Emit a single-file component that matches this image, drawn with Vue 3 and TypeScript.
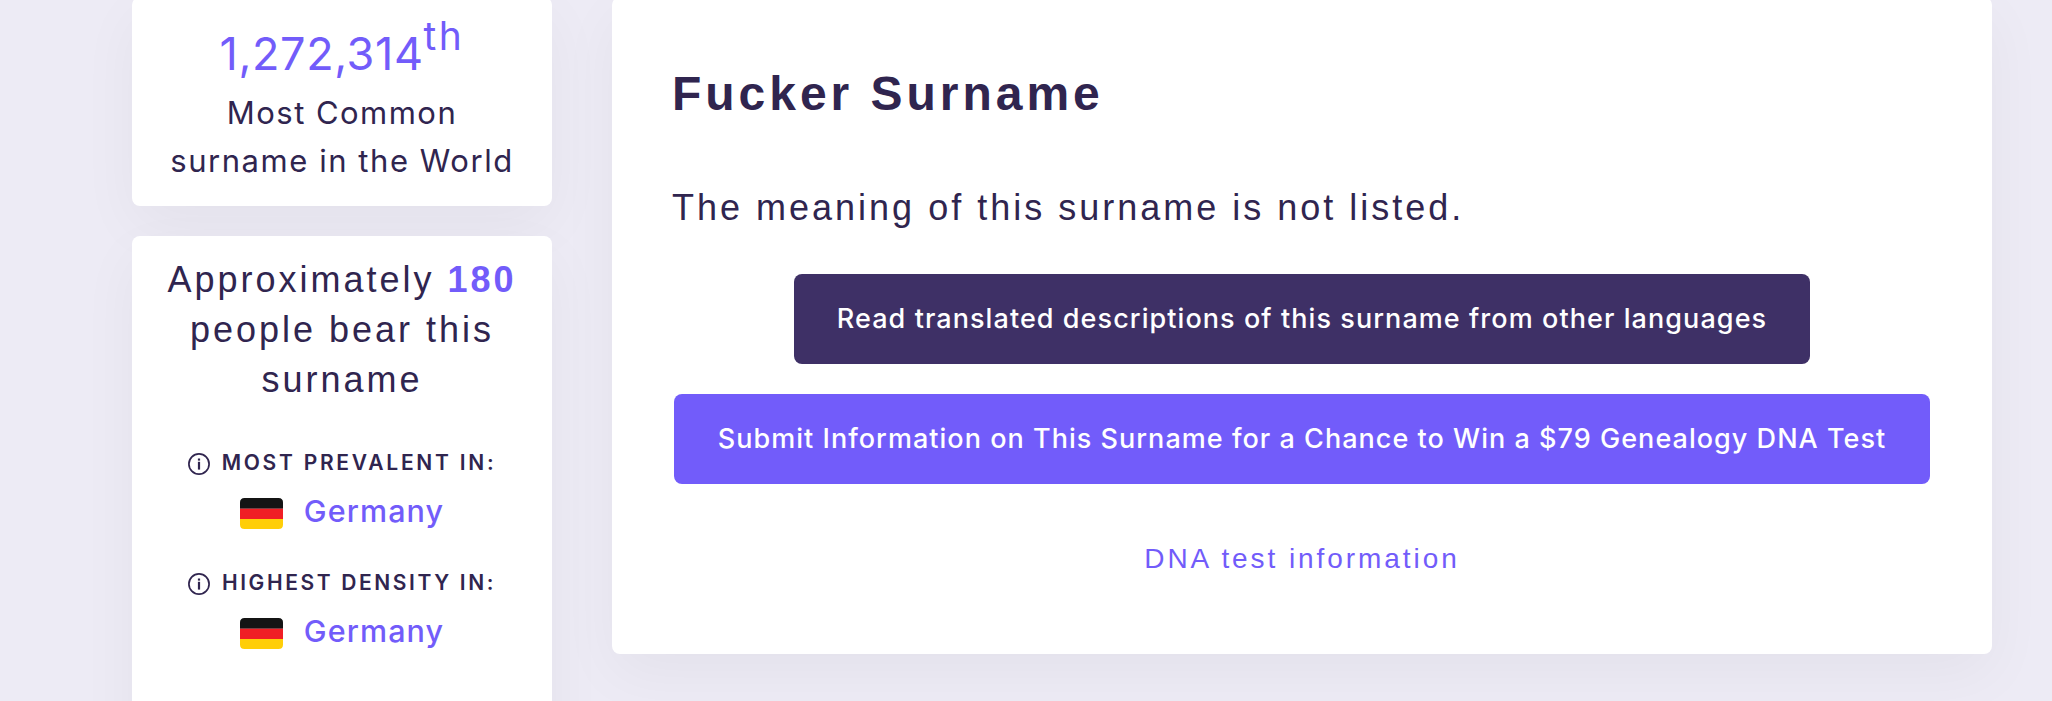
<script setup lang="ts">
interface Place {
  label: string
  country: string
  kind: string
}

const places: Place[] = [
  { label: 'MOST PREVALENT IN:', country: 'Germany', kind: 'prevalent' },
  { label: 'HIGHEST DENSITY IN:', country: 'Germany', kind: 'density' },
]
</script>

<template>
  <div class="page">
    <aside class="sidebar">
      <section class="card rank">
        <div class="rank-number">1,272,314<sup>th</sup></div>
        <div class="rank-line common">Most Common</div>
        <div class="rank-line">surname in the World</div>
      </section>

      <section class="card stats">
        <div class="bearers">
          Approximately <strong>180</strong><br />people bear this<br />surname
        </div>
        <div v-for="place in places" :key="place.kind" class="place">
          <div class="place-label">
            <svg class="info" viewBox="0 0 22 22" aria-hidden="true">
              <circle cx="11" cy="11" r="10.1" fill="none" stroke="currentColor" stroke-width="1.7" />
              <rect x="9.9" y="5.5" width="2.2" height="2.1" fill="currentColor" />
              <rect x="9.9" y="8.8" width="2.2" height="7.8" fill="currentColor" />
            </svg>
            <span :class="place.kind">{{ place.label }}</span>
          </div>
          <div class="country">
            <svg class="flag" viewBox="0 0 43 31" aria-hidden="true">
              <path d="M0 10.5V4.5Q0 0 4.5 0H38.5Q43 0 43 4.5V10.5Z" fill="#141414" />
              <rect y="10.3" width="43" height="10.7" fill="#f01f25" />
              <rect y="10" width="43" height="1" fill="#7b4044" />
              <path d="M0 21H43V26.5Q43 31 38.5 31H4.5Q0 31 0 26.5Z" fill="#ffce08" />
            </svg>
            <a>{{ place.country }}</a>
          </div>
        </div>
      </section>
    </aside>

    <main class="card main">
      <h1>Fucker Surname</h1>
      <p class="meaning">The meaning of this surname is not listed.</p>
      <div class="actions">
        <button class="btn dark">Read translated descriptions of this surname from other languages</button>
        <button class="btn">Submit Information on This Surname for a Chance to Win a $79 Genealogy DNA Test</button>
      </div>
      <a class="dna">DNA test information</a>
    </main>
  </div>
</template>

<style>
body {
  margin: 0;
  background: #edebf5;
}
</style>

<style scoped>
.page {
  box-sizing: border-box;
  display: flex;
  align-items: flex-start;
  gap: 60px;
  height: 701px;
  padding-left: 132px;
  overflow: hidden;
  background: #edebf5;
  color: #30254f;
  font-family: "Liberation Sans", Arial, sans-serif;
}
.card {
  box-sizing: border-box;
  background: #fff;
  border-radius: 8px;
  box-shadow: 0 20px 60px rgba(0, 0, 0, 0.042);
}
.sidebar {
  flex: none;
  display: flex;
  flex-direction: column;
  gap: 30px;
  width: 420px;
  margin-top: -3px;
  text-align: center;
  white-space: nowrap;
}
.rank {
  height: 209px;
  padding-top: 25px;
  font-family: Inter, sans-serif;
}
.rank-number {
  height: 67px;
  color: #725cfa;
  font-size: 45px;
  font-weight: 400;
  line-height: 64px;
  letter-spacing: 0.6px;
}
.rank-number sup {
  font-size: 39px;
  font-weight: 400;
  line-height: 0;
  vertical-align: 20px;
  letter-spacing: 2.5px;
}
.rank-line {
  font-size: 31px;
  line-height: 48px;
  letter-spacing: 1.55px;
}
.common {
  letter-spacing: 1.47px;
}
.stats {
  height: 520px;
  padding-top: 19px;
}
.bearers {
  margin-bottom: 38px;
  font-size: 36px;
  line-height: 50px;
  letter-spacing: 3px;
}
.bearers strong {
  color: #725cfa;
}
.place {
  height: 120px;
  font-family: Inter, sans-serif;
}
.place-label {
  display: flex;
  align-items: center;
  justify-content: center;
  gap: 12px;
  height: 44px;
  box-sizing: border-box;
  padding-bottom: 4px;
  font-size: 21px;
  font-weight: 600;
  line-height: 40px;
}
.prevalent {
  letter-spacing: 2.74px;
}
.density {
  letter-spacing: 2.61px;
}
.info {
  width: 22px;
  height: 22px;
  margin-top: 1px;
}
.country {
  display: flex;
  align-items: center;
  justify-content: center;
  gap: 21px;
  color: #725cfa;
  font-size: 30.5px;
  font-weight: 500;
  line-height: 48px;
  letter-spacing: 1.1px;
}
.flag {
  width: 43px;
  height: 31px;
  margin-top: 4px;
}
.main {
  flex: none;
  width: 1380px;
  height: 657px;
  margin-top: -3px;
  padding: 67px 60px 0;
  display: flex;
  flex-direction: column;
  align-items: flex-start;
}
h1 {
  margin: 0 0 59px;
  font-size: 48px;
  font-weight: 700;
  line-height: 60px;
  letter-spacing: 3.97px;
}
.meaning {
  margin: 0 0 41px;
  font-size: 36px;
  line-height: 50px;
  letter-spacing: 3px;
}
.actions {
  display: flex;
  flex-direction: column;
  align-items: center;
  align-self: center;
  gap: 30px;
}
.btn {
  box-sizing: border-box;
  width: 1256px;
  height: 90px;
  padding: 0 0 1px;
  border: 0;
  border-radius: 8px;
  background: #725cfa;
  color: #fff;
  font: 500 27px Inter, sans-serif;
  letter-spacing: 1.03px;
  white-space: nowrap;
}
.dark {
  width: 1016px;
  background: #3e3066;
  letter-spacing: 1.07px;
}
.dna {
  align-self: center;
  margin-top: 50px;
  color: #725cfa;
  font-size: 28px;
  line-height: 50px;
  letter-spacing: 2.93px;
}
</style>
